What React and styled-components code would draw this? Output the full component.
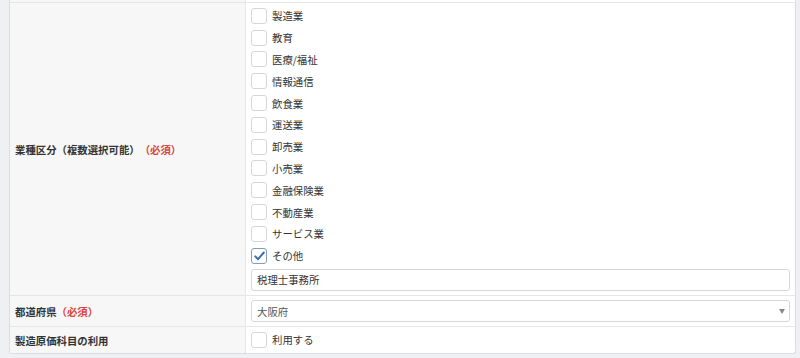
import React from 'react';
import styled, { createGlobalStyle } from 'styled-components';

const GlobalStyle = createGlobalStyle`
  html, body {
    margin: 0;
    padding: 0;
    background: #eef0f4;
  }
  body {
    font-family: "Noto Sans CJK JP", "Noto Sans", sans-serif;
    font-size: 10.4px;
    color: #333;
  }
`;

const Page = styled.div`
  width: 800px;
  height: 358px;
  padding: 0 4px 0 9px;
  box-sizing: border-box;
  overflow: hidden;
`;

const Panel = styled.div`
  background: #fff;
  border: 1px solid #dcdde0;
  border-top: none;
  border-radius: 0 0 3px 3px;
  overflow: hidden;
`;

const Row = styled.div`
  display: grid;
  grid-template-columns: 236px 1fr;
  border-bottom: 1px solid #e6e6e6;
  height: ${p => p.h}px;

  &:last-child {
    border-bottom: none;
  }
`;

const Label = styled.div`
  background: #f7f7f7;
  border-right: 1px solid #e6e6e6;
  display: flex;
  align-items: center;
  padding-left: 5px;
  font-weight: 700;
  color: #333;
  white-space: nowrap;
`;

const Required = styled.span`
  color: #d9463c;
`;

const Value = styled.div`
  padding: ${p => p.pad || '0 5px'};
  display: flex;
  flex-direction: column;
  justify-content: ${p => (p.center ? 'center' : 'flex-start')};
`;

const CheckList = styled.div`
  display: flex;
  flex-direction: column;
`;

const CheckItem = styled.label`
  display: flex;
  align-items: center;
  height: 21.8px;
  gap: 5px;
  color: #333;
`;

const Box = styled.span`
  width: 16px;
  height: 16px;
  box-sizing: border-box;
  border: 1px solid ${p => (p.checked ? '#7f9bc6' : '#d6d6d6')};
  border-radius: 3px;
  background: #fff;
  display: flex;
  align-items: center;
  justify-content: center;
  flex-shrink: 0;
`;

const TextInput = styled.div`
  height: 22px;
  margin-top: 2px;
  box-sizing: border-box;
  border: 1px solid #d6d6d6;
  border-radius: 3px;
  padding: 0 5px;
  display: flex;
  align-items: center;
  color: #333;
`;

const Select = styled(TextInput)`
  margin-top: 0;
  justify-content: space-between;
  color: #555;
`;

const Arrow = styled.span`
  width: 0;
  height: 0;
  border-left: 3px solid transparent;
  border-right: 3px solid transparent;
  border-top: 5px solid #888;
  margin-right: -1px;
`;

const industries = [
  '製造業', '教育', '医療/福祉', '情報通信', '飲食業', '運送業',
  '卸売業', '小売業', '金融保険業', '不動産業', 'サービス業', 'その他',
];

const Check = ({ checked, children }) => (
  <CheckItem>
    <Box checked={checked}>
      {checked && (
        <svg width="11" height="10" viewBox="0 0 11 10">
          <path d="M1.3 5.4 L4.1 8.2 L9.8 1.5" fill="none" stroke="#3b6cb4" strokeWidth="2" strokeLinecap="round" strokeLinejoin="round" />
        </svg>
      )}
    </Box>
    {children}
  </CheckItem>
);

export default function App() {
  return (
    <Page>
      <GlobalStyle />
      <Panel>
        <Row h={2}>
          <Label />
          <Value />
        </Row>
        <Row h={292}>
          <Label>
            業種区分（複数選択可能）<Required>（必須）</Required>
          </Label>
          <Value pad="2px 5px 0">
            <CheckList>
              {industries.map(name => (
                <Check key={name} checked={name === 'その他'}>{name}</Check>
              ))}
            </CheckList>
            <TextInput>税理士事務所</TextInput>
          </Value>
        </Row>
        <Row h={30}>
          <Label>
            都道府県<Required>（必須）</Required>
          </Label>
          <Value center>
            <Select>
              大阪府
              <Arrow />
            </Select>
          </Value>
        </Row>
        <Row h={26}>
          <Label>製造原価科目の利用</Label>
          <Value center>
            <Check>利用する</Check>
          </Value>
        </Row>
      </Panel>
    </Page>
  );
}
